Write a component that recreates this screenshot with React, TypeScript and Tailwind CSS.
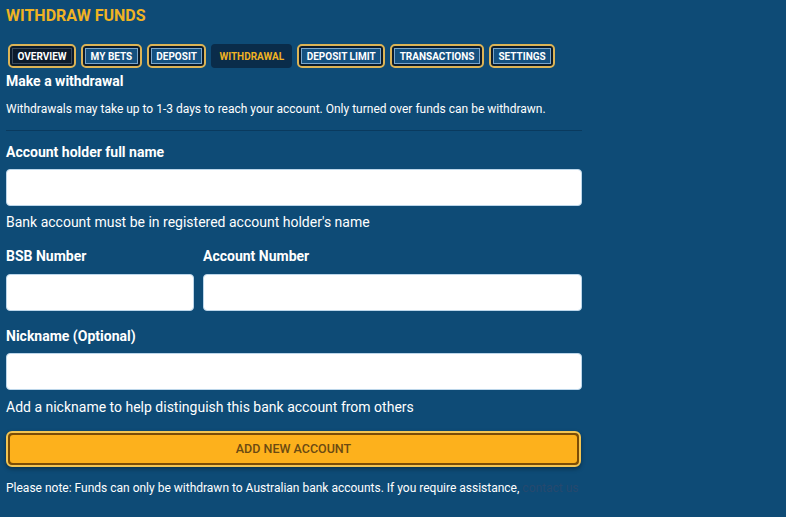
import React from "react";

const tabs = [
  { label: "OVERVIEW", state: "dark" },
  { label: "MY BETS", state: "normal" },
  { label: "DEPOSIT", state: "normal" },
  { label: "WITHDRAWAL", state: "active" },
  { label: "DEPOSIT LIMIT", state: "normal" },
  { label: "TRANSACTIONS", state: "normal" },
  { label: "SETTINGS", state: "normal" },
];

function Tab({ label, state }: { label: string; state: string }) {
  if (state === "active") {
    return (
      <button className="h-[24px] rounded-[4px] bg-[#0a2c4a] px-[8px] text-[10px] font-bold text-[#f0b323]">
        {label}
      </button>
    );
  }
  return (
    <button className="h-[24px] rounded-[5px] border-2 border-[#dcb456] bg-[#0b1b2c] p-[2px]">
      <span
        className={`flex h-full items-center border px-[4.5px] text-[10px] font-bold text-white ${
          state === "dark" ? "border-[#3a4a5c] bg-[#0b1a2b]" : "border-[#7aa6cc] bg-[#14507f]"
        }`}
      >
        {label}
      </span>
    </button>
  );
}

function Input({ className = "" }: { className?: string }) {
  return (
    <input
      type="text"
      className={`h-[37px] rounded-[4px] border border-[#bcd6ea] bg-white px-2 text-sm outline-none ${className}`}
    />
  );
}

export default function App() {
  return (
    <div
      className="min-h-[517px] w-full bg-[#0e4b76] text-white"
      style={{ fontFamily: "Roboto, 'Liberation Sans', sans-serif" }}
    >
      <div className="w-[582px] pl-[6px]">
        <h1 className="pt-[7px] text-[16px] font-bold leading-[18px] text-[#f0b323]">WITHDRAW FUNDS</h1>

        <div className="mt-[19px] flex gap-[5px] pl-[2px]">
          {tabs.map((t) => (
            <Tab key={t.label} label={t.label} state={t.state} />
          ))}
        </div>

        <h2 className="mt-[5px] text-[14px] font-bold leading-[16px]">Make a withdrawal</h2>
        <p className="mt-[13px] text-[12px] leading-[14px]">
          Withdrawals may take up to 1-3 days to reach your account. Only turned over funds can be withdrawn.
        </p>
        <div className="mt-[14px] h-px w-[576px] bg-[#0a3a5e]" />

        <label className="mt-[13px] block text-[14px] font-bold leading-[17px]">Account holder full name</label>
        <Input className="mt-[8px] w-[576px]" />
        <p className="mt-[8px] text-[14px] leading-[17px]">
          Bank account must be in registered account holder's name
        </p>

        <div className="mt-[17px] flex gap-[9px]">
          <div className="flex w-[188px] flex-col">
            <label className="text-[14px] font-bold leading-[17px]">BSB Number</label>
            <Input className="mt-[9px] w-full" />
          </div>
          <div className="flex flex-1 flex-col">
            <label className="text-[14px] font-bold leading-[17px]">Account Number</label>
            <Input className="mt-[9px] w-full" />
          </div>
        </div>

        <label className="mt-[17px] block text-[14px] font-bold leading-[17px]">Nickname (Optional)</label>
        <Input className="mt-[8px] w-[576px]" />
        <p className="mt-[9px] text-[14px] leading-[17px]">
          Add a nickname to help distinguish this bank account from others
        </p>

        <button className="mt-[15px] h-[36px] w-[575px] rounded-[6px] border-2 border-[#f3c552] bg-[#7a4c06] p-[2px] shadow-[0_2px_4px_rgba(0,0,0,0.35)]">
          <span className="flex h-full items-center justify-center rounded-[3px] bg-[#fdb11c] text-[12.5px] font-medium text-[#6b4a12]">
            ADD NEW ACCOUNT
          </span>
        </button>

        <p className="mt-[14px] text-[12px] leading-[14px]">
          Please note: Funds can only be withdrawn to Australian bank accounts. If you require assistance,{" "}
          <a className="text-[#26496e]">contact us</a>
        </p>
      </div>
    </div>
  );
}
